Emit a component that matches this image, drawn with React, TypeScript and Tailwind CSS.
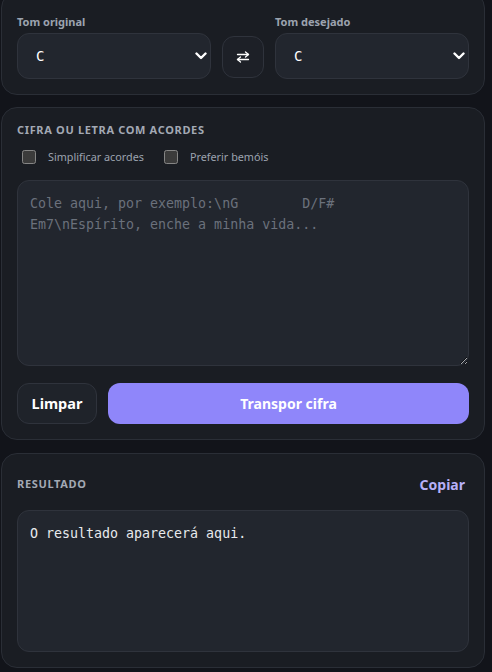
import React from "react";

const sans = { fontFamily: '"Noto Sans", "Open Sans", Arial, sans-serif' };
const mono = { fontFamily: '"DejaVu Sans Mono", "Liberation Mono", monospace' };

function Chevron() {
  return (
    <svg width="12" height="8" viewBox="0 0 12 8" className="pointer-events-none absolute right-[4px] top-1/2 -translate-y-1/2">
      <polyline points="1.5,1.5 6,6 10.5,1.5" fill="none" stroke="#ffffff" strokeWidth="2.4" strokeLinecap="round" strokeLinejoin="round" />
    </svg>
  );
}

function KeySelect() {
  return (
    <div className="relative h-[46px]">
      <select
        defaultValue="C"
        style={mono}
        className="h-full w-full appearance-none rounded-xl border border-[#2f333c] bg-[#22262e] pl-[18px] pr-8 text-[14px] text-white outline-none"
      >
        {["C", "C#", "D", "D#", "E", "F", "F#", "G", "G#", "A", "A#", "B"].map((k) => (
          <option key={k} value={k}>
            {k}
          </option>
        ))}
      </select>
      <Chevron />
    </div>
  );
}

function SwapIcon() {
  return (
    <svg width="14" height="12" viewBox="0 0 14 12" fill="none" stroke="#ffffff" strokeWidth="1.3" strokeLinecap="round" strokeLinejoin="round">
      <line x1="1.5" y1="3.5" x2="12.5" y2="3.5" />
      <polyline points="9.5,1 12.5,3.5 9.5,6" />
      <line x1="12.5" y1="8.5" x2="1.5" y2="8.5" />
      <polyline points="4.5,6 1.5,8.5 4.5,11" />
    </svg>
  );
}

export default function App() {
  return (
    <div className="h-[672px] overflow-hidden bg-[#12141a] scheme-dark" style={sans}>
      <div className="ml-px flex w-[484px] flex-col">
        {/* key selection */}
        <section className="mt-[-8px] rounded-2xl border border-[#2a2e36] bg-[#1a1d23] px-[15px] pt-[21px] pb-[15px]">
          <div className="grid grid-cols-[1fr_42px_1fr] gap-x-[11px] gap-y-[3px]">
            <label className="h-4 text-[11px] font-bold leading-4 text-[#9ca3af]">Tom original</label>
            <div />
            <label className="h-4 text-[11px] font-bold leading-4 text-[#9ca3af]">Tom desejado</label>
            <KeySelect />
            <button className="mb-px flex h-[42px] w-[42px] items-center justify-center self-end rounded-xl border border-[#2f333c] bg-[#1d2027]">
              <SwapIcon />
            </button>
            <KeySelect />
          </div>
        </section>

        {/* chord sheet input */}
        <section className="mt-3 rounded-2xl border border-[#2a2e36] bg-[#1a1d23] px-[15px] pt-[14px] pb-[15px]">
          <h2 className="h-4 text-[11px] font-bold uppercase leading-4 tracking-[0.06em] text-[#a3a9b4]">
            Cifra ou letra com acordes
          </h2>
          <div className="mt-[9px] flex h-5 items-center text-[10.8px] text-[#9ca3af]">
            <label className="ml-[5px] flex items-center gap-3">
              <input type="checkbox" className="h-[14px] w-[14px]" />
              Simplificar acordes
            </label>
            <label className="ml-[20px] flex items-center gap-3">
              <input type="checkbox" className="h-[14px] w-[14px]" />
              Preferir bemóis
            </label>
          </div>
          <textarea
            style={mono}
            className="mt-[13px] block h-[186px] w-full rounded-xl border border-[#2f333c] bg-[#22262e] px-3 pt-3 text-[13.3px] leading-[21px] text-[#e5e7eb] outline-none placeholder:text-[#6b717c]"
            placeholder={"Cole aqui, por exemplo:\\nG        D/F#\nEm7\\nEspírito, enche a minha vida..."}
          />
          <div className="mt-[17px] flex gap-[11px]">
            <button className="h-[41px] w-[80px] rounded-xl border border-[#2f333c] bg-[#1f232a] text-[14.5px] font-bold text-white">
              Limpar
            </button>
            <button className="h-[41px] flex-1 rounded-xl bg-[#8f86fa] text-[14px] font-bold text-white">
              Transpor cifra
            </button>
          </div>
        </section>

        {/* output */}
        <section className="mt-[13px] rounded-2xl border border-[#2a2e36] bg-[#1a1d23] px-[15px] pt-5 pb-[15px]">
          <div className="flex h-5 items-center justify-between">
            <h2 className="text-[11px] font-bold uppercase tracking-[0.06em] text-[#a3a9b4]">Resultado</h2>
            <button className="mr-[4px] text-[14px] font-bold text-[#b7b0f8]">Copiar</button>
          </div>
          <pre
            style={mono}
            className="mt-4 h-[142px] rounded-xl border border-[#2f333c] bg-[#22262e] px-3 pt-3 text-[13.3px] leading-[21px] text-[#e8eaed]"
          >
            O resultado aparecerá aqui.
          </pre>
        </section>
      </div>
    </div>
  );
}
